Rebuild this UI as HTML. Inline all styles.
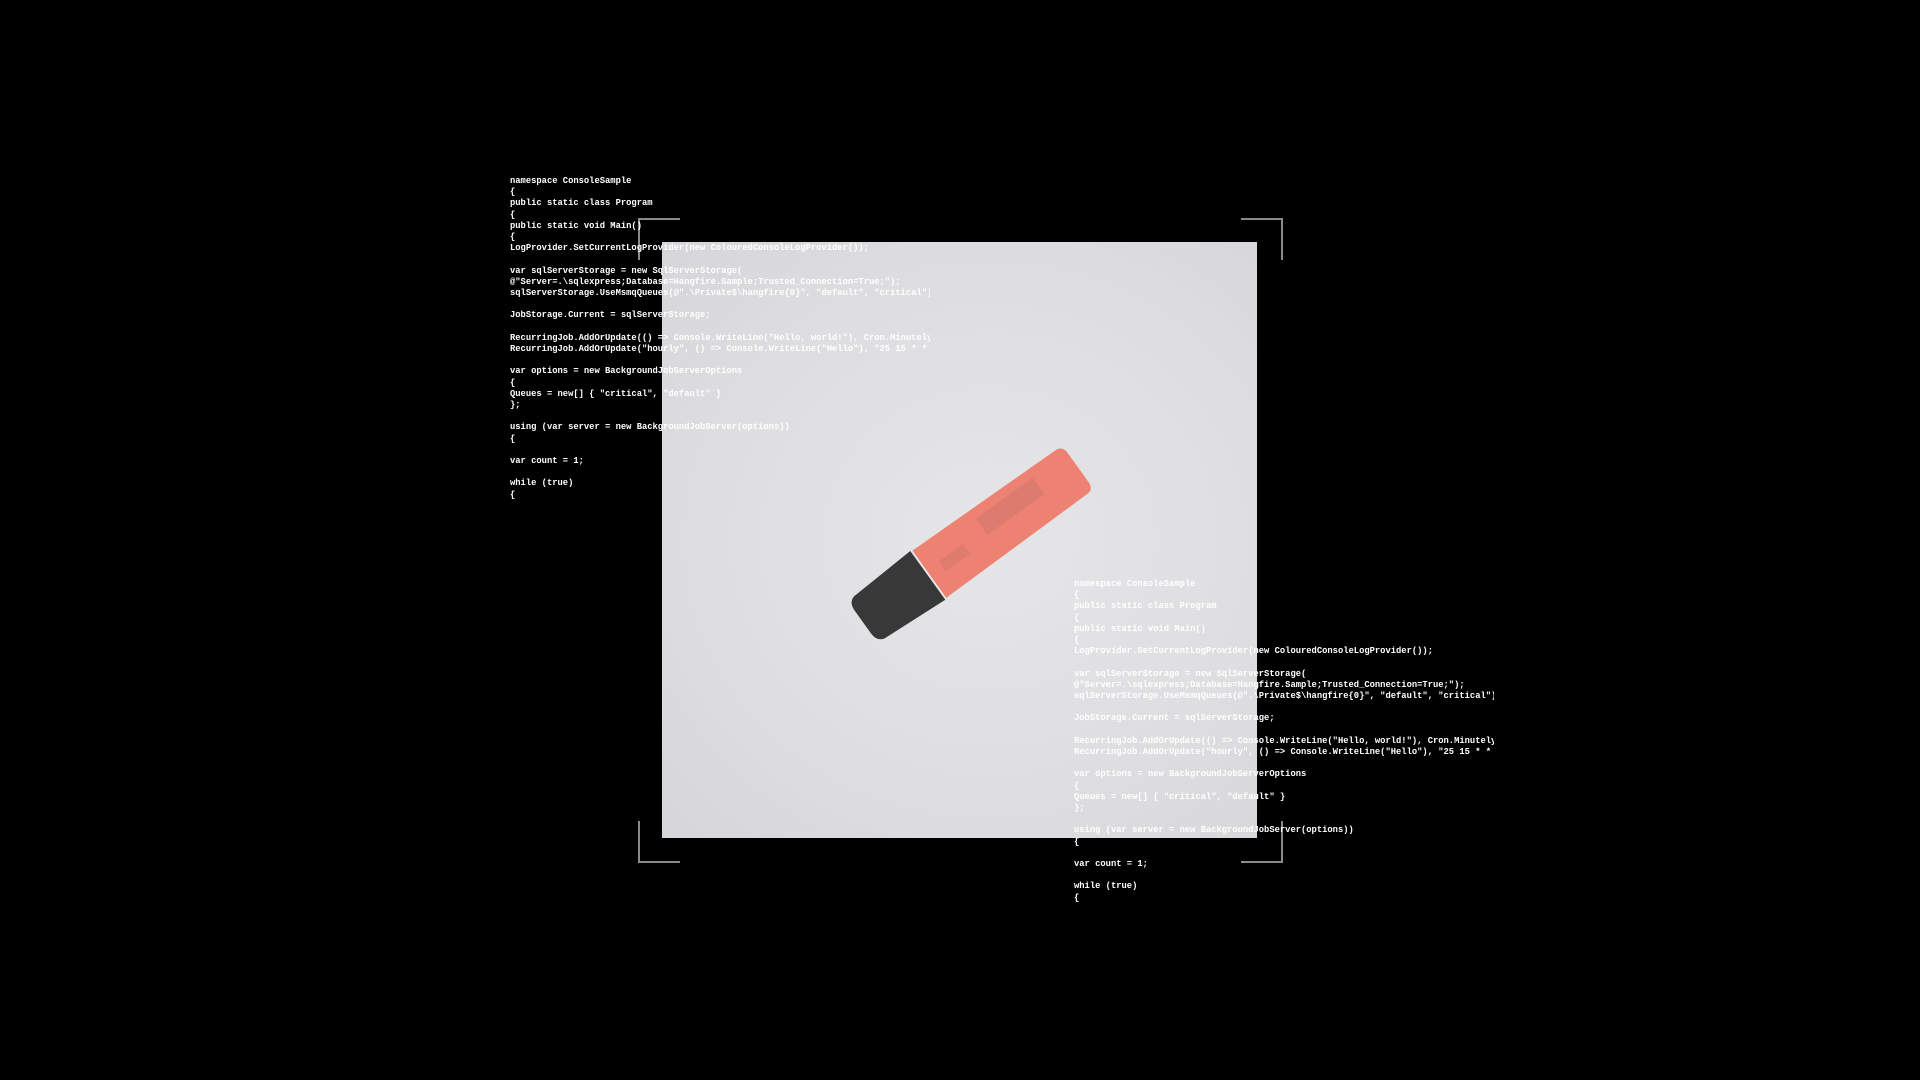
<!DOCTYPE html>
<html><head><meta charset="utf-8"><style>
html,body{margin:0;padding:0;background:#000;width:1920px;height:1080px;overflow:hidden;position:relative}
.img{position:absolute;left:662px;top:242px;width:595px;height:596px;background:radial-gradient(ellipse at 55% 50%,#e6e6e8 0%,#dedee0 60%,#d6d6d9 100%);}
.br{position:absolute;width:40px;height:40px;border-color:#8a8a8a;border-style:solid;border-width:0}
.code{position:absolute;width:420px;overflow:hidden;white-space:pre;font-family:"Liberation Mono",monospace;font-weight:bold;font-size:8.8px;line-height:11.2px;color:#fff}
svg{position:absolute;left:0;top:0}
</style></head><body>
<div class="img"></div>
<svg width="1920" height="1080">
<g transform="translate(970,545) rotate(-35.7)">
<path d="M-50,-29 L126,-27 Q133,-26 133,-18 L133,18 Q133,26 126,27 L-50,29 Z" fill="#ee8272"/>
<path d="M-52,-30 L-124,-26 Q-132,-24 -132,-14 L-132,14 Q-132,24 -124,26 L-52,30 Z" fill="#383838"/>
<rect x="20" y="-18" width="70" height="20" fill="#c9746a" opacity="0.5"/>
<rect x="-35" y="-5" width="30" height="12" fill="#c9746a" opacity="0.4"/>
</g>
</svg>
<div class="br" style="left:638px;top:218px;border-top-width:2px;border-left-width:2px"></div>
<div class="br" style="left:1241px;top:218px;border-top-width:2px;border-right-width:2px"></div>
<div class="br" style="left:638px;top:821px;border-bottom-width:2px;border-left-width:2px"></div>
<div class="br" style="left:1241px;top:821px;border-bottom-width:2px;border-right-width:2px"></div>
<div class="code" style="left:510px;top:176px">namespace ConsoleSample
{
public static class Program
{
public static void Main()
{
LogProvider.SetCurrentLogProvider(new ColouredConsoleLogProvider());

var sqlServerStorage = new SqlServerStorage(
@"Server=.\sqlexpress;Database=Hangfire.Sample;Trusted_Connection=True;");
sqlServerStorage.UseMsmqQueues(@".\Private$\hangfire{0}", "default", "critical");

JobStorage.Current = sqlServerStorage;

RecurringJob.AddOrUpdate(() => Console.WriteLine("Hello, world!"), Cron.Minutely);
RecurringJob.AddOrUpdate("hourly", () => Console.WriteLine("Hello"), "25 15 * * *");

var options = new BackgroundJobServerOptions
{
Queues = new[] { "critical", "default" }
};

using (var server = new BackgroundJobServer(options))
{

var count = 1;

while (true)
{</div>
<div class="code" style="left:1074px;top:579px">namespace ConsoleSample
{
public static class Program
{
public static void Main()
{
LogProvider.SetCurrentLogProvider(new ColouredConsoleLogProvider());

var sqlServerStorage = new SqlServerStorage(
@"Server=.\sqlexpress;Database=Hangfire.Sample;Trusted_Connection=True;");
sqlServerStorage.UseMsmqQueues(@".\Private$\hangfire{0}", "default", "critical");

JobStorage.Current = sqlServerStorage;

RecurringJob.AddOrUpdate(() => Console.WriteLine("Hello, world!"), Cron.Minutely);
RecurringJob.AddOrUpdate("hourly", () => Console.WriteLine("Hello"), "25 15 * * *");

var options = new BackgroundJobServerOptions
{
Queues = new[] { "critical", "default" }
};

using (var server = new BackgroundJobServer(options))
{

var count = 1;

while (true)
{</div>
</body></html>
